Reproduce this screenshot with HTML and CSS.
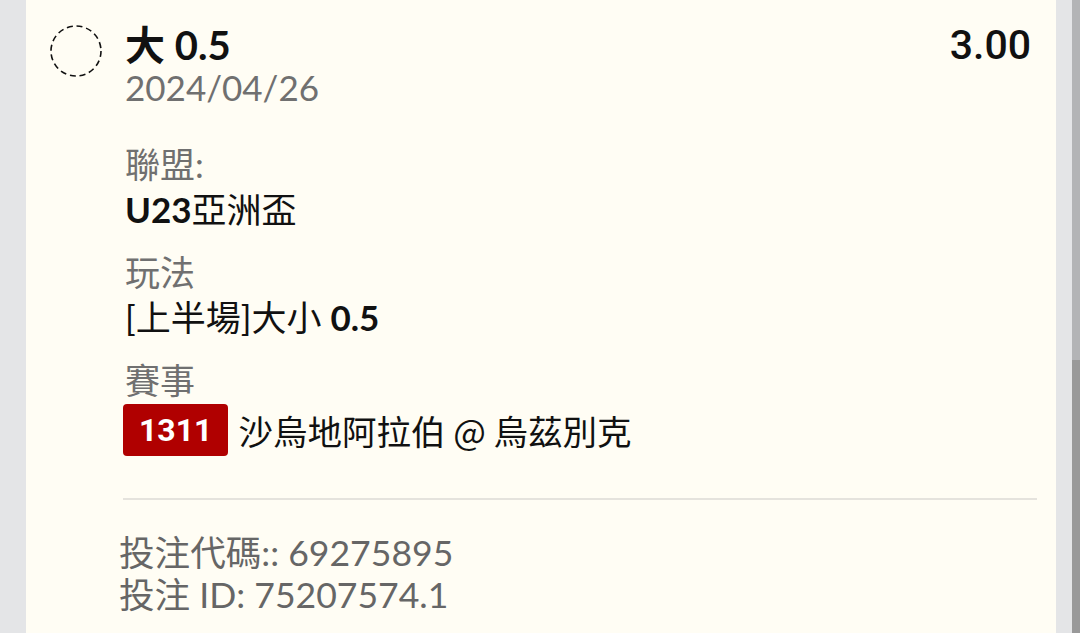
FILE: index.html
```html
<!DOCTYPE html>
<html lang="zh-Hant">

<head>
    <meta charset="UTF-8">
    <meta name="viewport" content="width=device-width, initial-scale=1.0">
    <title>注單詳情</title>
    <link rel="stylesheet" href="styles.css">
</head>

<body>
    <div class="screen">
        <main class="bet-card">
            <!-- Selection row -->
            <div class="bet">
                <div class="bet-check">
                    <svg width="52" height="52" viewBox="0 0 52 52">
                        <circle cx="26" cy="26" r="25" fill="none" stroke="#111" stroke-width="1.6" stroke-dasharray="6 3.8"></circle>
                    </svg>
                </div>
                <div class="bet-body">
                    <div class="bet-head">
                        <div class="bet-pick">大 0.5</div>
                        <div class="bet-odds">3.00</div>
                    </div>
                    <div class="bet-date">2024/04/26</div>

                    <div class="bet-info">
                        <div class="info-group">
                            <div class="info-label">聯盟:</div>
                            <div class="info-value"><strong>U23</strong>亞洲盃</div>
                        </div>
                        <div class="info-group">
                            <div class="info-label">玩法</div>
                            <div class="info-value">[上半場]大小 <strong>0.5</strong></div>
                        </div>
                        <div class="info-group">
                            <div class="info-label">賽事</div>
                            <div class="match-row">
                                <span class="match-no">1311</span>
                                <span class="match-name">沙烏地阿拉伯 @ 烏茲別克</span>
                            </div>
                        </div>
                    </div>
                </div>
            </div>

            <hr class="divider">

            <!-- Reference numbers -->
            <div class="bet-refs">
                <div>投注代碼:: 69275895</div>
                <div>投注 ID: 75207574.1</div>
            </div>
        </main>

        <div class="scrollbar">
            <div class="scrollbar-track"></div>
            <div class="scrollbar-thumb"></div>
        </div>
    </div>
</body>

</html>
```

FILE: styles.css
```css
/* General page styling */
html,
body {
    margin: 0;
    padding: 0;
    height: 100%;
    overflow: hidden;
}

body {
    font-family: Lato, "Noto Sans CJK TC", sans-serif;
    background-color: #e4e5e7;
    color: #111;
}

.screen {
    display: flex;
    height: 633px;
    padding-left: 26px;
}

/* Card */
.bet-card {
    width: 1030px;
    flex-shrink: 0;
    background-color: #fffdf4;
    padding: 24px 25px 0 24px;
    box-sizing: border-box;
}

.bet {
    display: flex;
    gap: 23px;
}

.bet-check {
    width: 52px;
    height: 52px;
    flex-shrink: 0;
    margin-top: 1px;
}

.bet-check svg {
    display: block;
}

.bet-body {
    flex: 1;
}

.bet-head {
    display: flex;
    justify-content: space-between;
    align-items: center;
    height: 42px;
}

.bet-pick {
    font-size: 40px;
    font-weight: 700;
    line-height: 42px;
}

.bet-odds {
    font-family: Roboto, sans-serif;
    font-size: 41px;
    font-weight: 500;
    line-height: 42px;
}

.bet-date {
    font-size: 35px;
    line-height: 42px;
    color: #707070;
}

/* Info groups */
.bet-info {
    display: flex;
    flex-direction: column;
    gap: 18px;
    margin-top: 34px;
}

.info-group {
    font-size: 35px;
    line-height: 45px;
}

.info-label {
    color: #707070;
}

.info-value strong {
    font-weight: 700;
}

.match-row {
    display: flex;
    align-items: center;
    height: 52px;
    margin-top: 1px;
}

.match-no {
    font-family: Roboto, sans-serif;
    font-size: 32px;
    font-weight: 700;
    color: #fff;
    background-color: #b00000;
    border-radius: 4px;
    height: 52px;
    line-height: 52px;
    padding: 0 16px;
    margin-left: -2px;
}

.match-name {
    margin-left: 10px;
    font-family: "Noto Sans CJK TC", sans-serif;
    font-size: 34.5px;
}

/* Divider */
.divider {
    border: none;
    height: 2px;
    background-color: #e5e3dd;
    margin: 42px -6px 0 73px;
}

/* Reference numbers */
.bet-refs {
    margin-top: 32px;
    padding-left: 69px;
    font-size: 35.6px;
    line-height: 42px;
    color: #666;
}

/* Fake scrollbar on the right */
.scrollbar {
    margin-left: 16px;
    width: 8px;
    display: flex;
    flex-direction: column;
}

.scrollbar-track {
    height: 360px;
    background-color: #b3b4b6;
}

.scrollbar-thumb {
    flex: 1;
    background-color: #999;
}
```
